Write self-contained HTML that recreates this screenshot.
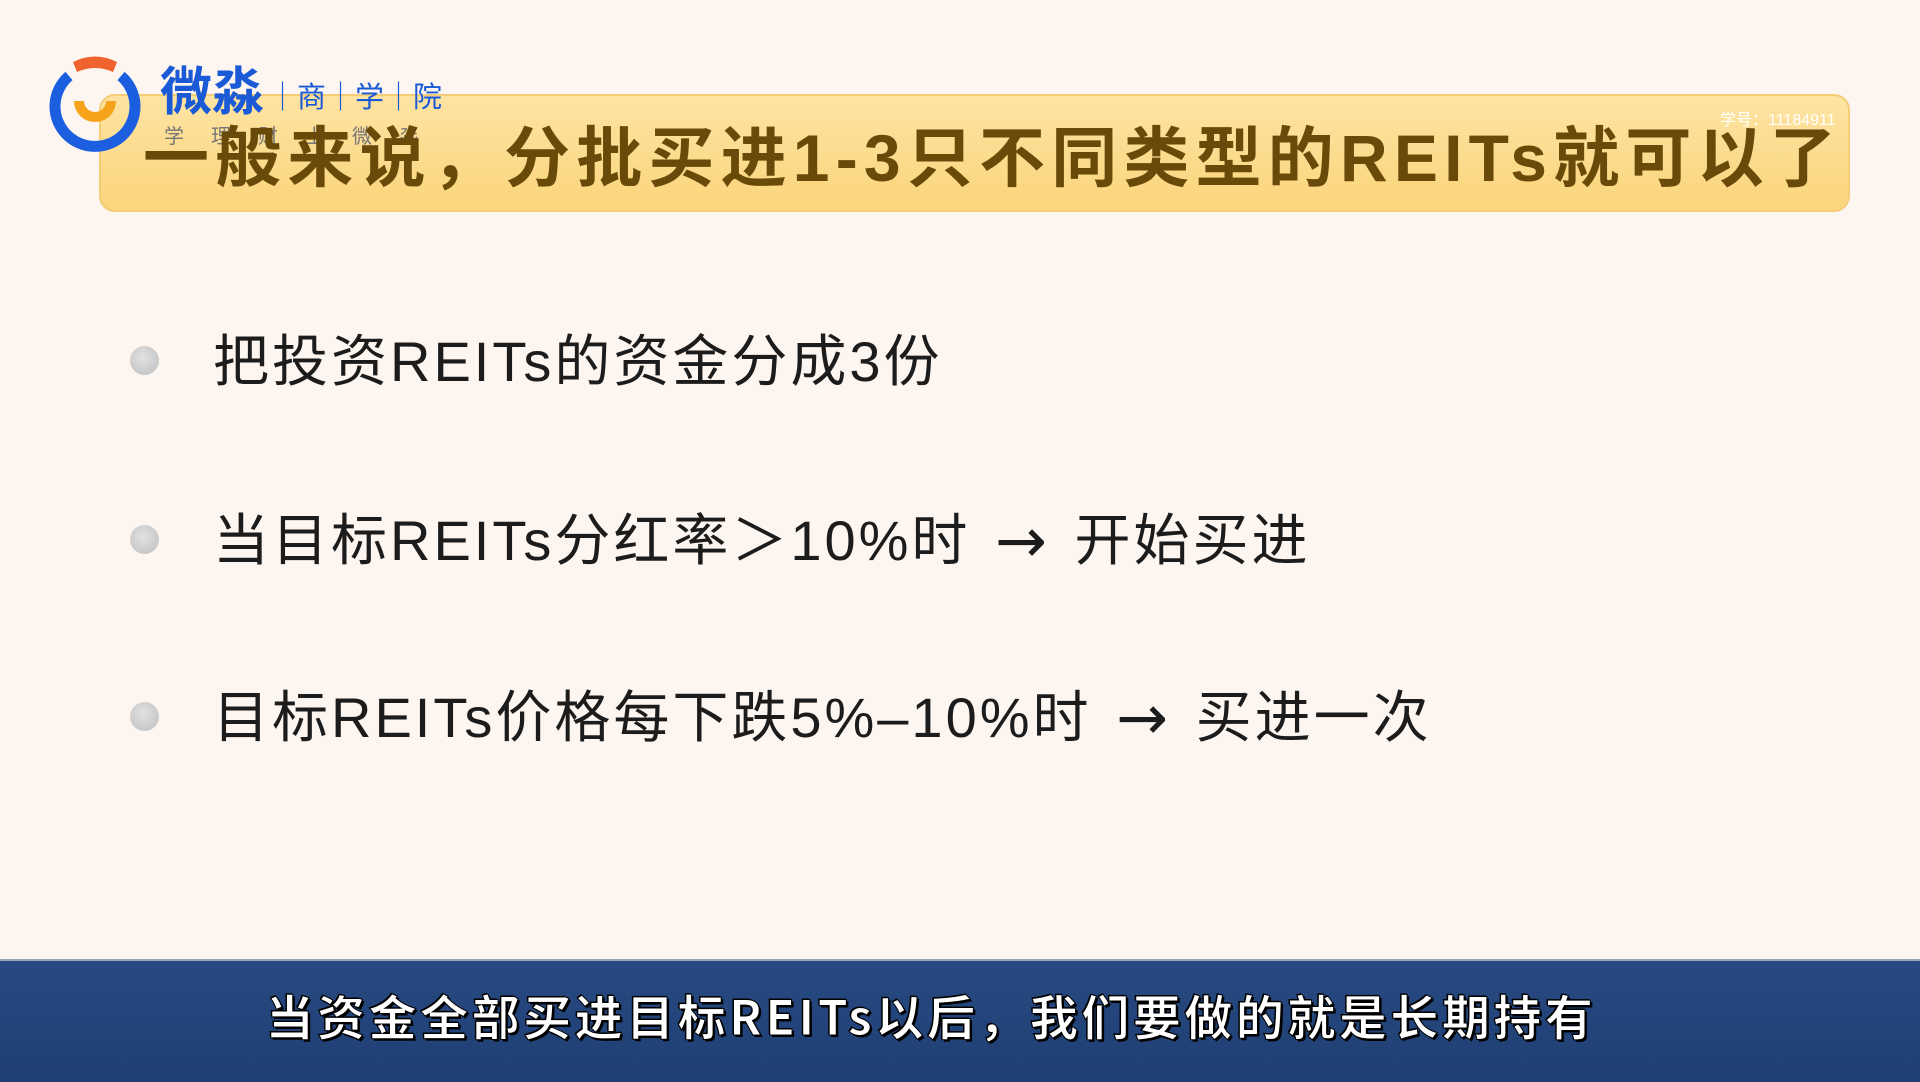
<!DOCTYPE html>
<html><head><meta charset="utf-8"><style>
body{margin:0;width:1920px;height:1080px;background:#fdf6f0;position:relative;overflow:hidden;font-family:"Liberation Sans","Noto Sans CJK SC",sans-serif}
.tb{position:absolute;left:99px;top:94px;width:1751px;height:118px;border-radius:16px;background:linear-gradient(#fde3a2,#fcd57c);border:2px solid #f6cd77;box-sizing:border-box}
.tt{position:absolute;left:143px;top:118px;font-size:66px;font-weight:bold;color:#6a4a08;white-space:nowrap;line-height:80px;font-family:"Liberation Sans","Noto Sans CJK SC",sans-serif;letter-spacing:6.2px}
.li{position:absolute;left:213px;font-size:56px;color:#1c1c1c;white-space:nowrap;line-height:64px;font-family:"Liberation Sans","Noto Sans CJK SC",sans-serif;letter-spacing:3px}
.ar{font-family:"DejaVu Sans",sans-serif;font-size:62px;line-height:50px;margin:0 6px;vertical-align:-2px}
.dot{position:absolute;left:130px;width:29px;height:29px;border-radius:50%;background:radial-gradient(circle at 45% 40%,#e2e2e2,#bdbdbd)}
.sub{position:absolute;left:0;top:959px;width:1920px;height:121px;background:linear-gradient(#274a82,#1f3f73);border-top:2px solid #9aa6b8}
.st{position:absolute;left:0;width:1862px;top:18px;text-align:center;font-size:48px;letter-spacing:3.5px;color:#fff;font-weight:bold;-webkit-text-stroke:1px #000;text-shadow:2px 2px 0 #000,-1px -1px 0 #000;font-family:"WenQuanYi Zen Hei","Noto Sans CJK SC",sans-serif}
</style></head><body>
<div class="tb"></div>
<svg style="position:absolute;left:45px;top:44px" width="100" height="110" viewBox="0 0 100 110">
<path d="M28 18 Q50 7 72 18 L68 28 Q50 20 32 28Z" fill="#f0622e"/>
<path d="M24 32 A40 40 0 1 0 76 32" fill="none" stroke="#1b5fe0" stroke-width="11"/>
<path d="M34 57 A16 16 0 0 0 66 57" fill="none" stroke="#f7a21b" stroke-width="10"/>
</svg>
<div style="position:absolute;left:160px;top:58px;font-size:52px;font-weight:bold;color:#1a5ad6;font-family:'Noto Sans CJK SC',sans-serif;line-height:60px">微淼</div>
<div style="position:absolute;left:268px;top:75px;font-size:29px;color:#1a5ad6;font-family:'Noto Sans CJK SC',sans-serif;line-height:40px;letter-spacing:0px">│商│学│院</div>
<div style="position:absolute;left:164px;top:120px;font-size:20px;color:#777;font-family:'Noto Sans CJK SC',sans-serif;letter-spacing:27px">学理财上微淼</div>
<div class="tt">一般来说，分批买进1-3只不同类型的REITs就可以了</div>
<div style="position:absolute;left:1720px;top:106px;font-size:16px;color:#fff">学号：11184911</div>
<div class="dot" style="top:346px"></div>
<div class="li" style="top:330px">把投资REITs的资金分成3份</div>
<div class="dot" style="top:525px"></div>
<div class="li" style="top:509px">当目标REITs分红率＞10%时 <span class="ar">→</span> 开始买进</div>
<div class="dot" style="top:702px"></div>
<div class="li" style="top:686px">目标REITs价格每下跌5%–10%时 <span class="ar">→</span> 买进一次</div>
<div class="sub"><div class="st">当资金全部买进目标REITs以后，我们要做的就是长期持有</div></div>
</body></html>
